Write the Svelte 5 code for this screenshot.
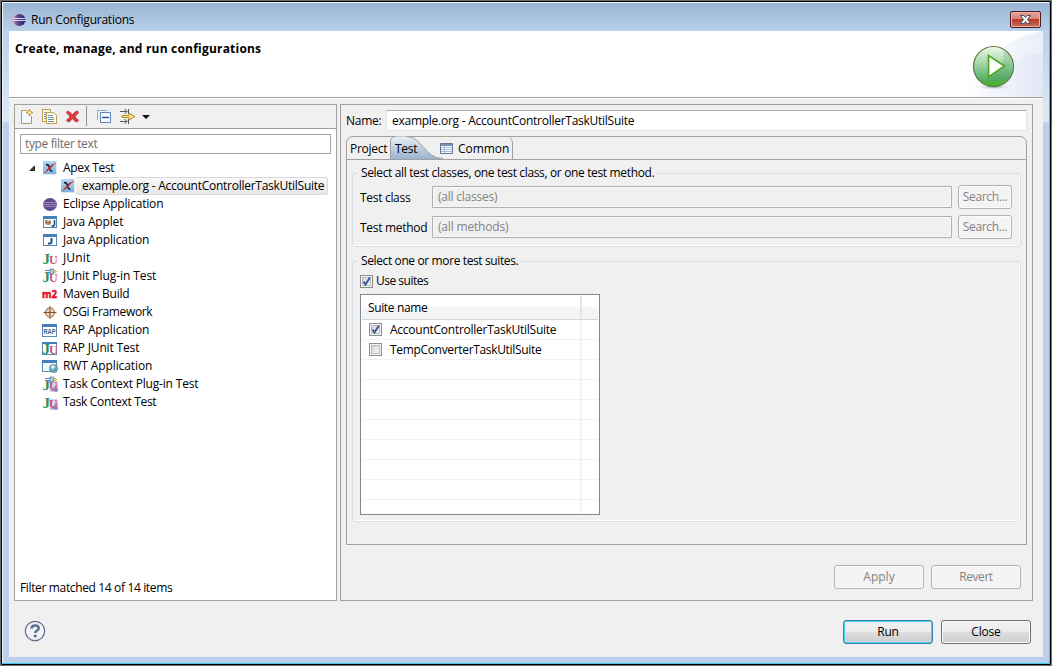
<script lang="ts">
	type TreeItem = { icon: string; label: string; width: number };

	const launchTypes: TreeItem[] = [
		{ icon: 'eclipse', label: 'Eclipse Application', width: 100 },
		{ icon: 'applet', label: 'Java Applet', width: 60 },
		{ icon: 'java', label: 'Java Application', width: 86 },
		{ icon: 'junit', label: 'JUnit', width: 27 },
		{ icon: 'plugin', label: 'JUnit Plug-in Test', width: 93 },
		{ icon: 'maven', label: 'Maven Build', width: 66 },
		{ icon: 'osgi', label: 'OSGi Framework', width: 89 },
		{ icon: 'rap', label: 'RAP Application', width: 86 },
		{ icon: 'rapjunit', label: 'RAP JUnit Test', width: 76 },
		{ icon: 'rwt', label: 'RWT Application', width: 89 },
		{ icon: 'taskplugin', label: 'Task Context Plug-in Test', width: 135 },
		{ icon: 'task', label: 'Task Context Test', width: 93 }
	];

	let useSuites = $state(true);
	let suites = $state([
		{ name: 'AccountControllerTaskUtilSuite', width: 166, checked: true },
		{ name: 'TempConverterTaskUtilSuite', width: 151, checked: false }
	]);
	const emptyRows = 8;

	function fit(node: HTMLElement, width: number) {
		const chars = (node.textContent || '').length;
		node.style.letterSpacing = '0px';
		const natural = node.getBoundingClientRect().width;
		node.style.letterSpacing = `${(width + 0.3 - natural) / chars}px`;
	}
</script>

{#snippet frame()}
	<rect x="1.5" y="2.5" width="13" height="11" fill="#fdfeff" stroke="#5b87b5" />
	<path d="M1 2h14v3H1z" fill="#4580bd" />
{/snippet}

{#snippet ju()}
	<text x="0.500" y="13.500" class="ju" fill="#2f8f5b">J</text>
	<text x="7" y="14" class="ju small" fill="#d8505f">U</text>
{/snippet}

{#snippet plug()}
	<path d="M3 2.500h5M3 4.500h5" stroke="#5385b8" />
	<path d="M8 1h3.500v5H8z" fill="#a9cdea" stroke="#4f79a8" stroke-width=".8" />
	<path d="M11.500 1.500l3 2-3 2z" fill="#f6d268" stroke="#b48a2c" stroke-width=".7" />
{/snippet}

{#snippet icon(kind: string)}
	<svg class="icon" width="16" height="16" viewBox="0 0 16 16">
		{#if kind === 'apex'}
			<rect x="1" y="1" width="14" height="14" fill="#dfe7ef" />
			<rect x="1" y="1" width="13" height="13" fill="url(#apexFill)" />
			<path d="M4 5q2-1 3 1.500l1.300 3.500q.5 1.200 2 .6" fill="none" stroke="#1f2530" stroke-width="1.700" />
			<path d="M10.500 4.500L4.500 11" stroke="#1f2530" stroke-width="1.100" />
			<path d="M13.500 3Q8 6 2.500 13 8.500 8.500 13.500 3z" fill="#e8281c" stroke="#e8281c" stroke-width=".5" />
		{:else if kind === 'eclipse'}
			<ellipse cx="8" cy="8.500" rx="7" ry="6.500" fill="#60498c" />
			<path d="M1 6.500h14M1 8.500h14M1 10.500h14" stroke="#b7a5d0" stroke-width=".7" />
		{:else if kind === 'applet'}
			{@render frame()}
			<path d="M3 6h2l1 1 2-1 1 1v3l-2 1H5L3 9z" fill="#b98b62" />
			<path d="M4 8.500h1m2 0h1" stroke="#5b3a22" />
			<path d="M12.500 6v4.500q0 2-3 1.500" fill="none" stroke="#24548d" stroke-width="1.700" />
		{:else if kind === 'java'}
			{@render frame()}
			<path d="M9.500 6v4q0 2-3.500 1.500" fill="none" stroke="#24548d" stroke-width="2" />
		{:else if kind === 'junit'}
			{@render ju()}
		{:else if kind === 'plugin'}
			{@render ju()}
			{@render plug()}
		{:else if kind === 'maven'}
			<text x="0" y="12" class="m2" textLength="15" lengthAdjust="spacingAndGlyphs">m2</text>
		{:else if kind === 'osgi'}
			<circle cx="8" cy="8.500" r="4.700" fill="#e3c6a8" stroke="#9b7252" />
			<circle cx="8" cy="8.500" r="2.500" fill="none" stroke="#f3e0cc" />
			<path d="M8 2v13M1.500 8.500h13" stroke="#81502e" />
		{:else if kind === 'rap'}
			<rect x=".5" y="2.500" width="14" height="12" fill="#fdfeff" stroke="#5b87b5" />
			<path d="M0 2h15v3H0z" fill="#4580bd" />
			<text x="1.500" y="12" class="rap" textLength="12" lengthAdjust="spacingAndGlyphs">RAP</text>
		{:else if kind === 'rapjunit'}
			<rect x=".5" y="2.500" width="14" height="12" fill="#fdfeff" stroke="#5b87b5" />
			<path d="M0 2h15v2H0z" fill="#4580bd" />
			{@render ju()}
		{:else if kind === 'rwt'}
			<rect x=".5" y="2.500" width="14" height="11" fill="#f3f9ff" stroke="#5b87b5" />
			<path d="M0 2h15v3H0z" fill="#4580bd" />
			<circle cx="11.500" cy="10.500" r="4" fill="#6fb6dd" stroke="#4a769f" stroke-width=".8" />
			<path d="M9 8l3-1 1 2-2 2-2-1z" fill="#f3ead0" />
			<path d="M12 12l2-2v2l-2 2zM9 11l2 2-1 .5z" fill="#57a35c" />
		{:else if kind === 'task' || kind === 'taskplugin'}
			<path d="M7 5h8.500v10H7z" fill="#d9d6ee" />
			<path d="M8 15.500l7.500-8v8z" fill="#9d97ca" />
			{@render ju()}
			<path d="M12 15.500l3.500-3.500v3.500z" fill="#8078ba" />
			{#if kind === 'taskplugin'}
				{@render plug()}
			{/if}
		{/if}
	</svg>
{/snippet}

{#snippet checkbox(checked: boolean)}
	<svg class="check" width="13" height="13" viewBox="0 0 13 13">
		<rect x=".5" y=".5" width="12" height="12" fill="#f4f4f4" stroke="#8e8f8f" />
		<rect x="2.500" y="2.500" width="8" height="8" fill="url(#checkFill)" stroke="#b9bdc3" />
		{#if checked}
			<path d="M3.500 6.500l2 3L10 2.500" fill="none" stroke="#40568f" stroke-width="2" />
		{/if}
	</svg>
{/snippet}

<div class="window">
	<svg class="defs" width="0" height="0">
		<defs>
			<linearGradient id="apexFill" x1="0" y1="0" x2="0" y2="1">
				<stop offset="0" stop-color="#b4d8f4" />
				<stop offset="1" stop-color="#7cb2e2" />
			</linearGradient>
			<linearGradient id="checkFill" x1="0" y1="0" x2="1" y2="1">
				<stop offset="0" stop-color="#cdd2d9" />
				<stop offset="1" stop-color="#fafafa" />
			</linearGradient>
		</defs>
	</svg>

	<div class="titlebar">
		<svg width="16" height="16" viewBox="0 0 16 16">
			<defs>
				<linearGradient id="logo" x1="0" x2="1">
					<stop offset="0" stop-color="#b787b4" />
					<stop offset=".35" stop-color="#5b4a94" />
					<stop offset="1" stop-color="#26206b" />
				</linearGradient>
			</defs>
			<ellipse cx="6" cy="8" rx="6" ry="6" fill="#d8a6c4" />
			<circle cx="7.500" cy="8" r="6" fill="url(#logo)" />
			<path d="M1 6.500h12.500M1 8.500h12.500" stroke="#d5d3ee" />
		</svg>
		<span class="title" use:fit={103}>Run Configurations</span>
		<button class="close" aria-label="Close window">
			<svg width="31" height="17" viewBox="0 0 31 17">
				<path d="M10.500 4.500h3.500l1.500 2 1.500-2h3.500l-3 4 3 4h-3.500l-1.500-2-1.500 2h-3.500l3-4z" fill="#fff" stroke="#4c4f63" />
			</svg>
		</button>
	</div>

	<div class="client">
		<header>
			<h1><span use:fit={246}>Create, manage, and run configurations</span></h1>
			<svg class="banner" width="150" height="66" viewBox="0 0 150 66">
				<defs>
					<linearGradient id="swoosh" x1="0" x2="1">
						<stop offset="0" stop-color="#fff" />
						<stop offset="1" stop-color="#dfe6f7" />
					</linearGradient>
					<linearGradient id="ball" x1="0" y1="0" x2="0" y2="1">
						<stop offset="0" stop-color="#f0f9ec" />
						<stop offset=".4" stop-color="#a9d9ab" />
						<stop offset=".8" stop-color="#5bb06a" />
						<stop offset="1" stop-color="#4fc010" />
					</linearGradient>
					<radialGradient id="shade">
						<stop offset="0" stop-color="#8f98ad" />
						<stop offset="1" stop-color="#fff" stop-opacity="0" />
					</radialGradient>
				</defs>
				<path d="M75 66Q98 8 150 0v66z" fill="url(#swoosh)" opacity=".65" />
				<path d="M68 66Q108 24 150 22v44z" fill="url(#swoosh)" opacity=".8" />
				<ellipse cx="101" cy="56" rx="20" ry="3" fill="url(#shade)" />
				<circle cx="100.500" cy="35.500" r="20" fill="url(#ball)" stroke="#59793e" stroke-width="1.200" />
				<path d="M111 19a19 19 0 0 1-23 32q24-6 23-32z" fill="#339653" opacity=".2" />
				<path d="M95.500 24.500v21.500l16-11z" fill="#fff" stroke="#50a420" stroke-width="1.700" />
			</svg>
		</header>

		<main>
			<section class="left">
				<div class="toolbar">
					<svg width="140" height="22" viewBox="0 0 140 22">
						<!-- new -->
						<path d="M7 6h6v4h3v8H7z" fill="#f2f8ff" />
						<path d="M12 5.500H6.500v13h10V11" fill="none" stroke="#ab9b67" />
						<path d="M14.500 4l1 2.500 2.500 1-2.500 1-1 2.500-1-2.500-2.500-1 2.500-1z" fill="#fff2a8" stroke="#b58b23" stroke-width=".9" />
						<!-- duplicate -->
						<path d="M27.500 4.500h8v12h-8z" fill="#fffbe9" stroke="#b8a04e" />
						<path d="M31.500 7.500h7l3 3v8h-10z" fill="#fffdf0" stroke="#b8a04e" />
						<path d="M29 7.500h2M29 9.500h2M29 11.500h2M29 13.500h2M33 10.500h5M33 12.500h6M33 14.500h6M33 16.500h6" stroke="#6f93bd" />
						<!-- delete -->
						<path d="M52.500 6q3 1 5 4 2-3.500 5-4l1 2q-2.500 1.500-3.500 3.800 1.500 2.200 3.500 3.200l-1.500 2q-3-1-4.500-3.500-1.500 2.500-4.500 3.500l-1.500-2q2.500-1.500 3.500-3.200-1.500-2.800-3.500-3.800z" fill="#e43b3b" stroke="#b91f28" stroke-width=".8" />
						<path d="M71.500 1v20" stroke="#8f8f8f" />
						<!-- collapse all -->
						<path d="M82.500 15V5.500H92" fill="none" stroke="#8cacd1" />
						<path d="M85.500 7.500h10v10h-10z" fill="#f5faff" stroke="#5e83b5" />
						<path d="M87 12.500h7" stroke="#284d8c" stroke-width="1.400" />
						<!-- filter -->
						<path d="M105 6.500h7M105 16.500h7M109.500 4l2.500 2.500-2.500 2.500M109.500 14l2.500 2.500-2.500 2.500M113.500 4v5M113.500 14v5" fill="none" stroke="#4c5461" />
						<path d="M107 10.500h7V8l6 3.500-6 3.500v-2.500h-7z" fill="#f9df91" stroke="#b98a23" />
						<path d="M127 10h8l-4 4z" fill="#111" />
					</svg>
				</div>
				<div class="filter"><span use:fit={72}>type filter text</span></div>
				<ul class="tree">
					<li class="root">
						<svg class="twisty" width="7" height="7" viewBox="0 0 7 7"><path d="M5.500 1v4.500H1z" fill="#404040" stroke="#222" /></svg>
						{@render icon('apex')}
						<span use:fit={51}>Apex Test</span>
					</li>
					<li class="child">
						{@render icon('apex')}
						<div class="selected"><span use:fit={242}>example.org - AccountControllerTaskUtilSuite</span></div>
					</li>
					{#each launchTypes as item}
						<li>
							{@render icon(item.icon)}
							<span use:fit={item.width}>{item.label}</span>
						</li>
					{/each}
				</ul>
				<div class="status"><span use:fit={152}>Filter matched 14 of 14 items</span></div>
			</section>

			<section class="right">
				<div class="name-row">
					<span use:fit={35}>Name:</span>
					<div class="name-input"><span use:fit={242}>example.org - AccountControllerTaskUtilSuite</span></div>
				</div>

				<div class="folder">
					<div class="tabs">
						<div class="tab project"><span use:fit={37}>Project</span></div>
						<div class="tab test">
							<svg class="curve" width="55" height="23" viewBox="0 0 55 23">
								<defs>
									<linearGradient id="tabFill" x1="0" y1="0" x2="0" y2="1">
										<stop offset="0" stop-color="#e9eff5" />
										<stop offset="1" stop-color="#99b4d1" />
									</linearGradient>
								</defs>
								<path d="M.5 23V5Q1 .5 6 .5H16C33 .5 34 22.500 53 22.500V23z" fill="url(#tabFill)" />
								<path d="M.5 23V5Q1 .5 6 .5M16 .5C33 .5 34 22.500 53 22.500" fill="none" stroke="#a0a0a0" />
							</svg>
							<span use:fit={22}>Test</span>
						</div>
						<div class="tab common">
							<svg width="14" height="12" viewBox="0 0 14 12">
								<path d="M.5.5h12v10H.5z" fill="#fff" stroke="#62789b" />
								<path d="M1 1h11v2H1z" fill="#7892ba" />
								<path d="M1 4.500h11M1 6.500h11M1 8.500h11M4.500 3v7" stroke="#a9bad2" />
							</svg>
							<span use:fit={51}>Common</span>
						</div>
					</div>

					<div class="page">
						<fieldset class="classes">
							<legend><span use:fit={293}>Select all test classes, one test class, or one test method.</span></legend>
							<div class="field">
								<label for="cls"><span use:fit={50}>Test class</span></label>
								<div id="cls" class="input"><span use:fit={59}>(all classes)</span></div>
								<button disabled><span use:fit={44}>Search...</span></button>
							</div>
							<div class="field">
								<label for="mth"><span use:fit={67}>Test method</span></label>
								<div id="mth" class="input"><span use:fit={70}>(all methods)</span></div>
								<button disabled><span use:fit={44}>Search...</span></button>
							</div>
						</fieldset>

						<fieldset class="suites">
							<legend><span use:fit={157}>Select one or more test suites.</span></legend>
							<div class="use">
								{@render checkbox(useSuites)}
								<span use:fit={52}>Use suites</span>
							</div>
							<div class="table">
								<div class="row head">
									<div><span use:fit={59}>Suite name</span></div>
									<div></div>
								</div>
								{#each suites as suite}
									<div class="row">
										<div>
											{@render checkbox(suite.checked)}
											<span use:fit={suite.width}>{suite.name}</span>
										</div>
										<div></div>
									</div>
								{/each}
								{#each Array(emptyRows) as _}
									<div class="row"><div></div><div></div></div>
								{/each}
							</div>
						</fieldset>
					</div>
				</div>

				<div class="actions">
					<button disabled><span use:fit={31}>Apply</span></button>
					<button disabled><span use:fit={33}>Revert</span></button>
				</div>
			</section>
		</main>

		<footer>
			<svg class="help" width="22" height="22" viewBox="0 0 22 22">
				<circle cx="11" cy="11" r="9.700" fill="#f1f3f6" stroke="#5e6f8c" stroke-width="1.200" />
				<path d="M7.500 8.500q0-3 3.700-3t3.500 2.800q0 1.500-2 2.500-1.500.8-1.500 2.200" fill="none" stroke="#5f7191" stroke-width="2.600" />
				<circle cx="11.200" cy="16" r="1.600" fill="#5f7191" />
			</svg>
			<button class="default"><span use:fit={21}>Run</span></button>
			<button><span use:fit={29}>Close</span></button>
		</footer>
	</div>
</div>

<style>
	:global(body) {
		background: #6e6e6e;
	}

	.window {
		box-sizing: border-box;
		width: 1052px;
		height: 666px;
		padding: 1px 6px 5px 6px;
		border: 1px solid #6e6e6e;
		border-radius: 2px;
		background:
			linear-gradient(#97b3d1, #b9d1ea 30px, #d9e6f4 110px, #dbe8f5 120px, #b9d1ea 122px, #b9d1ea);
		box-shadow: inset 0 0 0 1px #000, inset -2px -2px 0 0 #3cc8e8, inset 2px 2px 0 0 #eef5fb;
		font: 12px/18px "Open Sans", "Noto Sans", sans-serif;
		color: #000;
	}

	.defs {
		position: absolute;
	}

	span {
		display: inline-block;
		white-space: pre;
	}

	.titlebar {
		display: flex;
		align-items: center;
		box-sizing: border-box;
		height: 29px;
		padding: 6px 4px 0 5px;
	}

	.title {
		margin-left: 3px;
	}

	.close {
		width: 31px;
		height: 17px;
		margin-left: auto;
		margin-bottom: 1px;
		padding: 0;
		min-width: 0;
		border: 1px solid #4e1a24;
		border-radius: 2px;
		background: linear-gradient(#e5a093, #d9857a 48%, #b83b28 50%, #c9705c);
		box-shadow: inset 0 0 0 1px #e9b1a8;
	}

	.close svg {
		flex: none;
	}

	.client {
		width: 1034px;
		height: 626px;
		margin-left: 2px;
		background: #f0f0f0;
	}

	header {
		display: flex;
		justify-content: space-between;
		height: 66px;
		border-bottom: 1px solid #a0a0a0;
		box-shadow: 0 1px 0 #fff;
		background: #fff;
	}

	h1 {
		margin: 9px 0 0 6px;
		font-size: 12px;
		line-height: 18px;
		font-weight: 700;
	}

	.banner {
		display: block;
	}

	main {
		display: flex;
		gap: 3px;
		padding: 6px 10px 0 5px;
	}

	section {
		box-sizing: border-box;
		height: 497px;
		border: 1px solid #a0a0a0;
	}

	.left {
		display: flex;
		flex-direction: column;
		width: 323px;
		background: #fff;
	}

	.toolbar {
		height: 23px;
		border-bottom: 1px solid #a0a0a0;
		background: #f0f0f0;
	}

	.toolbar svg {
		display: block;
	}

	.filter {
		box-sizing: border-box;
		height: 20px;
		margin: 5px 5px 0;
		padding: 0 4px;
		border: 1px solid #a0a4aa;
		color: #6d6d6d;
	}

	.tree {
		flex: 1;
		margin: 5px 0 0;
		padding: 0;
		list-style: none;
	}

	.tree li {
		display: flex;
		align-items: center;
		height: 18px;
		padding-left: 27px;
	}

	.tree .icon {
		margin-right: 5px;
	}

	.tree .root {
		padding-left: 14px;
	}

	.twisty {
		margin-right: 6px;
	}

	.tree .child {
		padding-left: 45px;
	}

	.tree .child .icon {
		margin-right: 0;
	}

	.selected {
		box-sizing: border-box;
		height: 18px;
		padding: 0 3px 0 6px;
		border: 1px solid #d9d9d9;
		border-left: 0;
		border-radius: 2px;
		background: linear-gradient(#f9f9f9, #e7e7e7);
		line-height: 16px;
	}

	.icon,
	.check {
		flex: none;
		display: block;
	}

	.ju {
		font: bold 15px "Liberation Serif", serif;
	}

	.ju.small {
		font-size: 12px;
	}

	.m2 {
		font: bold 11px "Open Sans", sans-serif;
		fill: #e00c14;
		stroke: #e00c14;
		stroke-width: 0.5;
	}

	.rap {
		font: bold 7px "Liberation Sans", sans-serif;
		fill: #2d6686;
	}

	.status {
		padding: 0 5px 3px;
	}

	.right {
		width: 693px;
		padding: 5px 5px 0;
	}

	.name-row {
		display: flex;
		align-items: center;
		justify-content: space-between;
		height: 21px;
	}

	.name-input {
		box-sizing: border-box;
		width: 641px;
		height: 21px;
		padding: 1px 5px;
		border: 1px solid #e2e3ea;
		border-top-color: #abadb3;
		background: #fff;
	}

	.folder {
		box-sizing: border-box;
		height: 409px;
		margin-top: 5px;
		border: 1px solid #a0a0a0;
		border-radius: 7px 7px 0 0;
	}

	.tabs {
		display: flex;
		height: 22px;
		border-bottom: 1px solid #a0a0a0;
	}

	.tab {
		display: flex;
		align-items: center;
		box-sizing: border-box;
		height: 22px;
		padding-top: 2px;
	}

	.project {
		width: 44px;
		padding-left: 3px;
	}

	.test {
		position: relative;
		width: 49px;
		padding-left: 4px;
	}

	.curve {
		position: absolute;
		left: -1px;
		top: -1px;
	}

	.test span {
		position: relative;
	}

	.common {
		gap: 4px;
		width: 73px;
		border-right: 1px solid #a0a0a0;
		border-radius: 0 6px 0 0;
	}

	.page {
		padding: 4px 5px 0;
	}

	fieldset {
		box-sizing: border-box;
		min-width: 0;
		margin: 0;
		padding: 0 8px 0 7px;
		border: 1px solid #d5dfe5;
		border-radius: 3px;
		box-shadow: inset -1px -1px 0 #fff;
	}

	legend {
		height: 18px;
		margin-left: -2px;
		padding: 0 2px 0 3px;
	}

	.classes {
		height: 83px;
	}

	.suites {
		height: 270px;
		margin-top: 5px;
	}

	.field {
		display: flex;
		align-items: center;
		height: 24px;
		margin-bottom: 6px;
	}

	.classes legend {
		margin-bottom: 3px;
	}

	.field label {
		width: 72px;
		padding-top: 1px;
	}

	.input {
		box-sizing: border-box;
		width: 520px;
		height: 22px;
		margin-right: 6px;
		padding: 1px 5px;
		border: 1px solid #afafaf;
		border-radius: 1px;
		box-shadow: inset 0 0 0 1px #f8f8f8;
		color: #838383;
	}

	button {
		display: flex;
		align-items: center;
		justify-content: center;
		box-sizing: border-box;
		width: 90px;
		height: 24px;
		padding: 0;
		border: 1px solid #707070;
		border-radius: 3px;
		background: linear-gradient(#f2f2f2, #ebebeb 48%, #dddddd 50%, #cfcfcf);
		box-shadow: inset 0 0 0 1px #fbfbfb;
		font: inherit;
		color: #000;
	}

	button:disabled {
		border-color: #adb2b5;
		background: #f4f4f4;
		color: #838383;
	}

	.field button {
		width: 54px;
	}

	.default {
		border-color: #3c7fb1;
		box-shadow: inset 0 0 0 1px #48d0f5;
	}

	.use {
		display: flex;
		align-items: center;
		gap: 3px;
		height: 18px;
		margin: 2px 0 4px;
	}

	.table {
		box-sizing: border-box;
		width: 240px;
		height: 221px;
		padding: 1px;
		border: 1px solid #828790;
		overflow: hidden;
		background: #fff;
	}

	.row {
		display: grid;
		grid-template-columns: 220px 1fr;
		height: 20px;
	}

	.row > div {
		display: flex;
		align-items: center;
		box-sizing: border-box;
		border-bottom: 1px solid #f0f0f0;
	}

	.row > div:first-child {
		padding-left: 7px;
		border-right: 2px solid #edf2fb;
	}

	.row .check {
		margin-right: 8px;
	}

	.row.head {
		height: 24px;
		background: linear-gradient(#fff 45%, #f5f6f8 46%, #f2f3f5);
	}

	.row.head > div {
		border-bottom-color: #d5d5d5;
	}

	.row.head > div:first-child {
		padding-left: 6px;
		border-right-color: #e4e5e7;
	}

	.row:last-child {
		height: 14px;
	}

	.row:last-child > div {
		border-bottom: 0;
	}

	.actions {
		display: flex;
		justify-content: flex-end;
		gap: 7px;
		margin: 20px 6px 0 0;
	}

	footer {
		display: flex;
		align-items: center;
		gap: 8px;
		padding: 19px 12px 0 15px;
	}

	.help {
		margin: -2px auto 0 0;
	}
</style>
